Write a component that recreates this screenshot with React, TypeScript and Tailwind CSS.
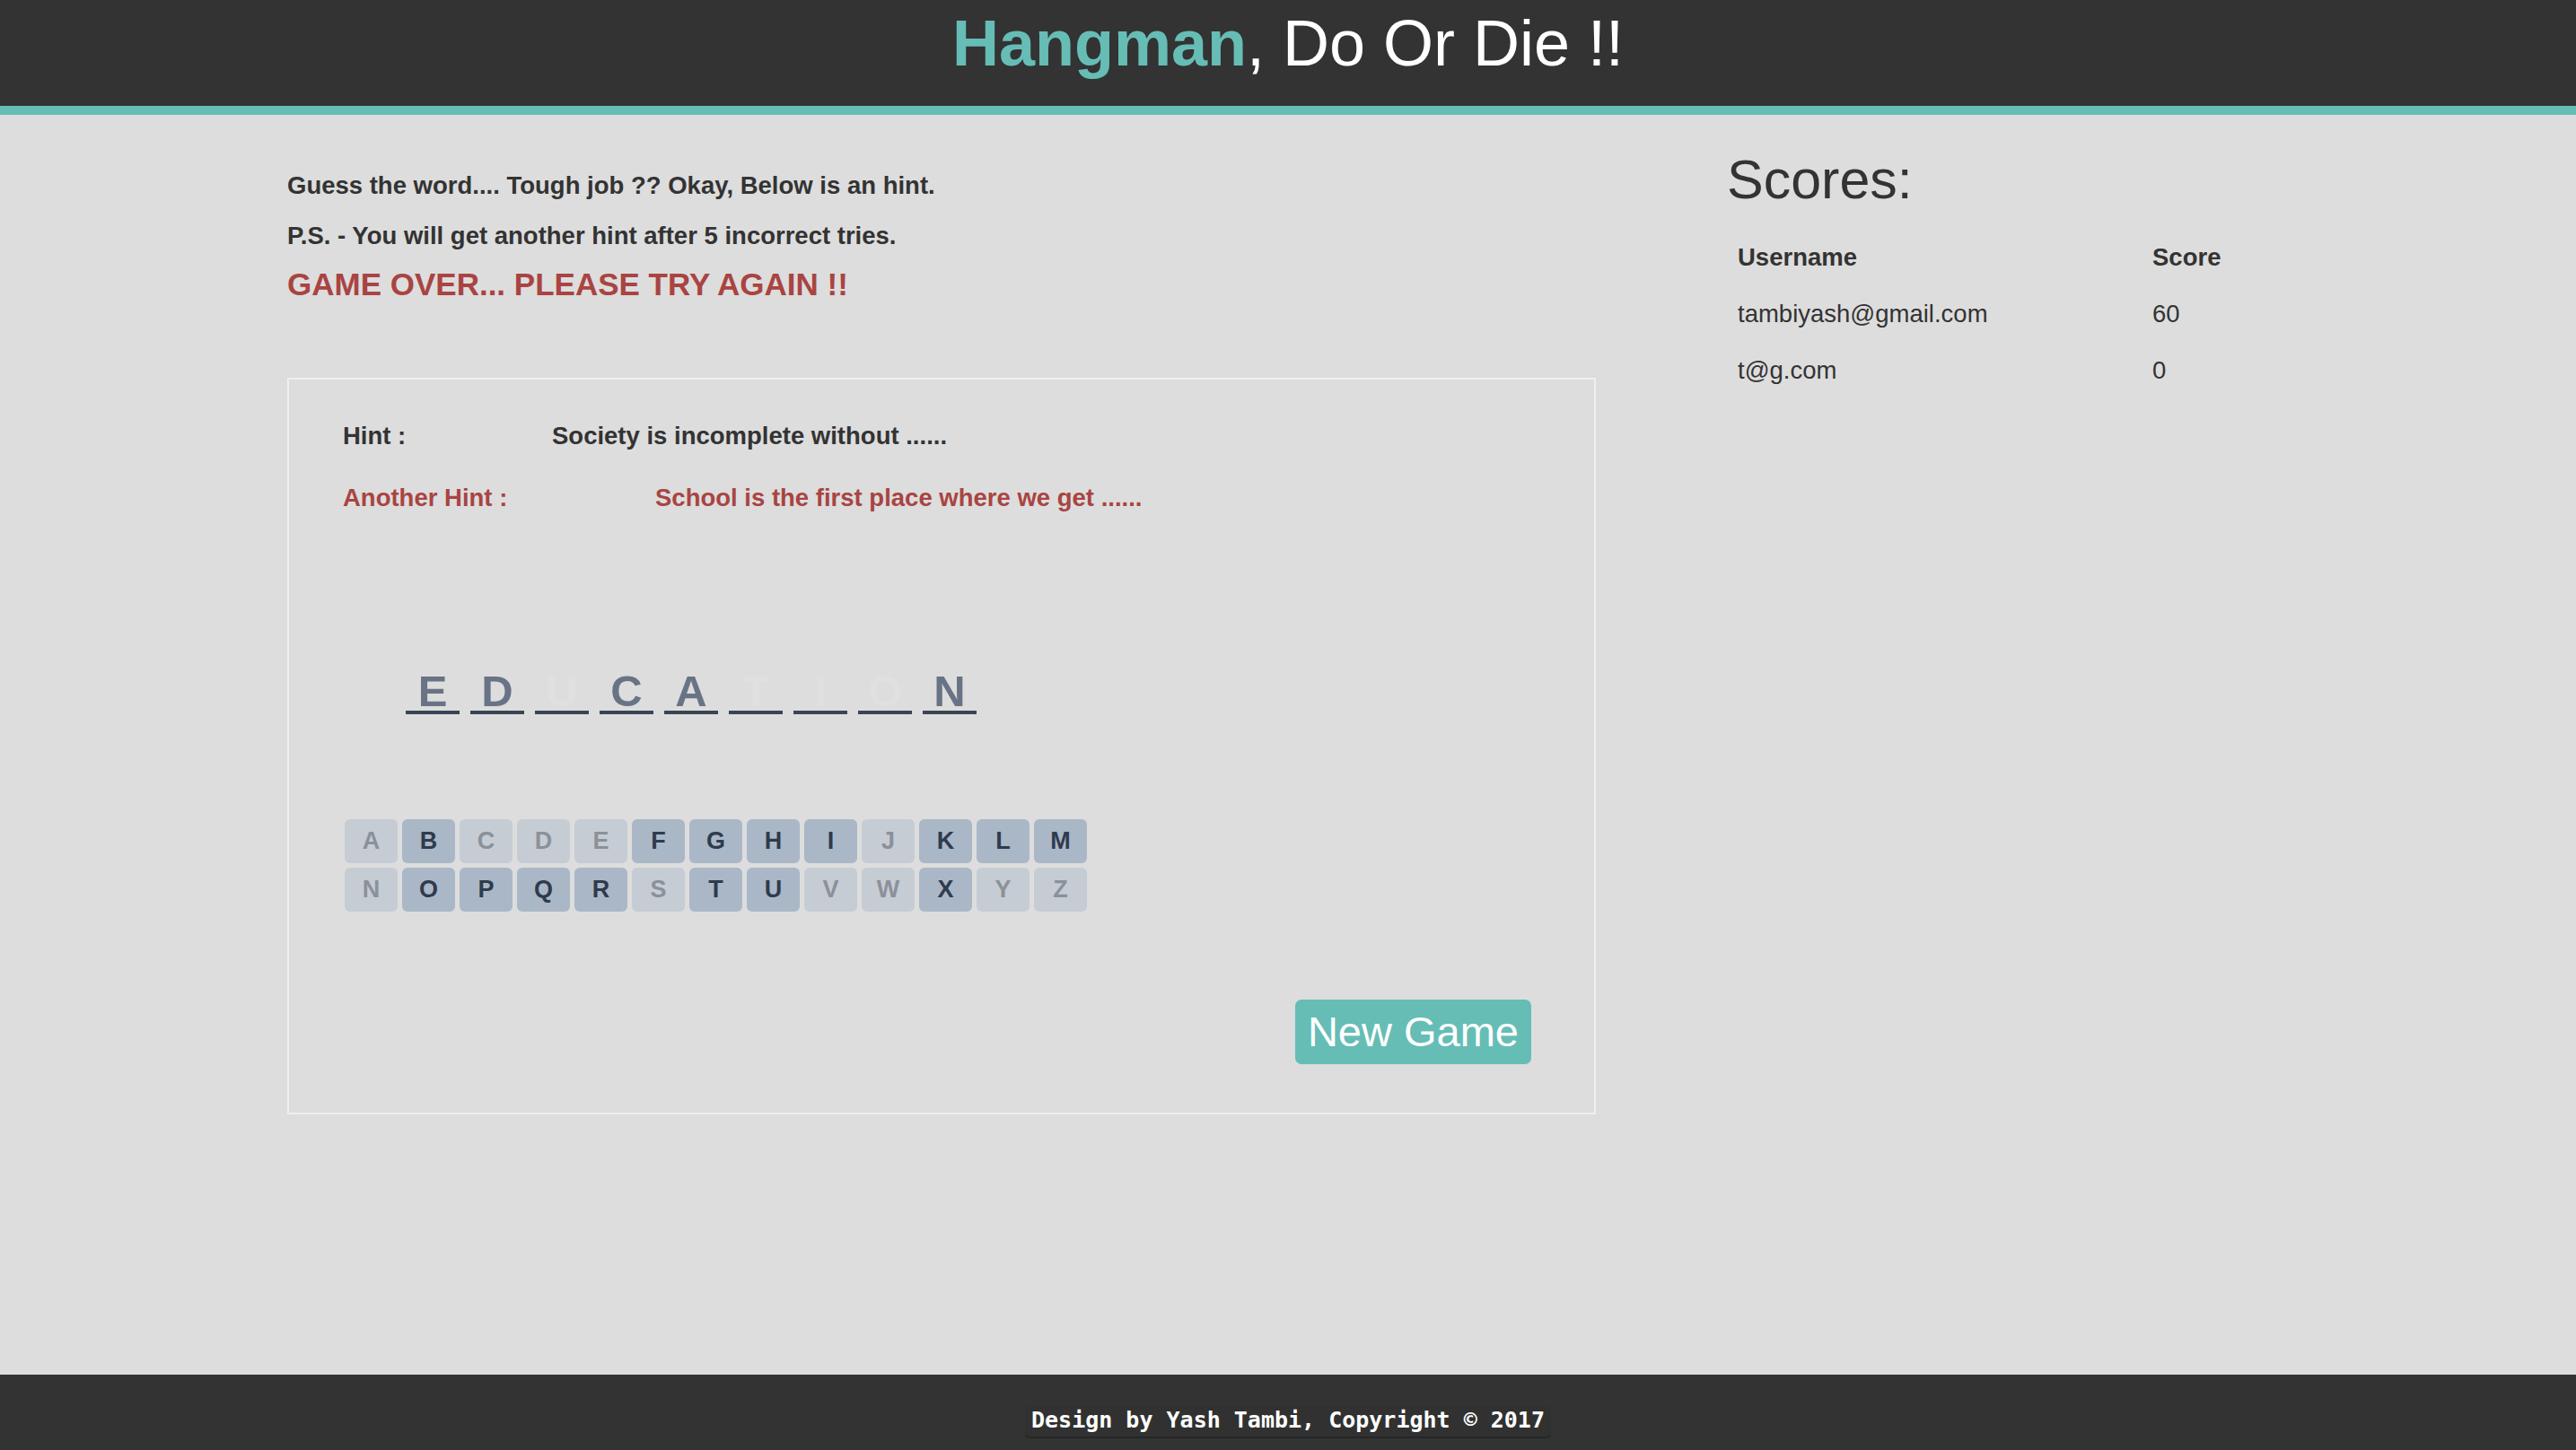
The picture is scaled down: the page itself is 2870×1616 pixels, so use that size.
import React from "react";

const rowOne = "ABCDEFGHIJKLM".split("");
const rowTwo = "NOPQRSTUVWXYZ".split("");
const usedLetters = new Set(["A", "C", "D", "E", "J", "N", "S", "V", "W", "Y", "Z"]);

const word = [
  { ch: "E", shown: true },
  { ch: "D", shown: true },
  { ch: "U", shown: false },
  { ch: "C", shown: true },
  { ch: "A", shown: true },
  { ch: "T", shown: false },
  { ch: "I", shown: false },
  { ch: "O", shown: false },
  { ch: "N", shown: true },
];

const scores = [
  { user: "tambiyash@gmail.com", score: 60 },
  { user: "t@g.com", score: 0 },
];

const Key = ({ letter }: { letter: string }) => {
  const used = usedLetters.has(letter);
  return (
    <button
      className={
        used
          ? "w-[59px] h-[49px] rounded-[6px] bg-[#c5ccd4] text-[#8b9199] text-[27px] font-bold flex items-center justify-center"
          : "w-[59px] h-[49px] rounded-[6px] bg-[#aab7c7] text-[#2f3b4d] text-[27px] font-bold flex items-center justify-center"
      }
    >
      {letter}
    </button>
  );
};

const App = () => {
  return (
    <div className="min-h-screen flex flex-col bg-[#dddddd] text-[#333333] font-['Liberation_Sans',Arial,sans-serif]">
      {/* Header */}
      <header className="h-[128px] bg-[#333333] border-b-[10px] border-[#66bdb6]">
        <h1 className="text-center text-[72px] leading-none pt-[12px] text-white">
          <span className="font-bold text-[#66bdb6]">Hangman</span>, Do Or Die !!
        </h1>
      </header>

      <main className="flex-1 flex pl-[320px]">
        {/* Game column */}
        <section className="w-[1458px]">
          <p className="mt-[59px] text-[27.5px] leading-[40px] font-bold">
            Guess the word.... Tough job ?? Okay, Below is an hint.
          </p>
          <p className="mt-[16px] text-[27.5px] leading-[40px] font-bold">
            P.S. - You will get another hint after 5 incorrect tries.
          </p>
          <p className="mt-[12px] text-[35px] leading-[44px] font-bold text-[#a94442]">
            GAME OVER... PLEASE TRY AGAIN !!
          </p>

          <div className="mt-[82px] border-2 border-[#efefef] px-[60px] pt-[43px] pb-[54px]">
            <div className="flex text-[27.5px] leading-[40px] font-bold">
              <span className="w-[233px]">Hint :</span>
              <span>Society is incomplete without ......</span>
            </div>
            <div className="mt-[29px] flex text-[27.5px] leading-[40px] font-bold text-[#a94442]">
              <span className="w-[348px]">Another Hint :</span>
              <span>School is the first place where we get ......</span>
            </div>

            {/* Word */}
            <div className="mt-[174px] pl-[70px] flex gap-[12px]">
              {word.map((w, i) => (
                <span
                  key={i}
                  className={
                    w.shown
                      ? "w-[60px] text-center text-[49px] leading-[43px] font-bold text-[#687486] border-b-4 border-[#3a4454]"
                      : "w-[60px] text-center text-[49px] leading-[43px] font-bold text-[#dfe0e2] border-b-4 border-[#3a4454]"
                  }
                >
                  {w.ch}
                </span>
              ))}
            </div>

            {/* Keyboard */}
            <div className="mt-[117px] ml-[2px] flex flex-col gap-[5px]">
              <div className="flex gap-[5px]">
                {rowOne.map((l) => (
                  <Key key={l} letter={l} />
                ))}
              </div>
              <div className="flex gap-[5px]">
                {rowTwo.map((l) => (
                  <Key key={l} letter={l} />
                ))}
              </div>
            </div>

            <div className="mt-[98px] flex justify-end pr-[10px]">
              <button className="h-[72px] px-[14px] rounded-[7px] bg-[#66bdb6] text-white text-[47px] leading-[72px]">
                New Game
              </button>
            </div>
          </div>
        </section>

        {/* Scores column */}
        <aside className="ml-[146px] w-[620px]">
          <h2 className="mt-[39px] text-[61px] leading-[67px]">Scores:</h2>
          <table className="mt-[21px] w-[612px] text-[27.5px] leading-[40px] text-left">
            <thead>
              <tr>
                <th className="w-[462px] px-[12px] py-[11.5px] font-bold">Username</th>
                <th className="px-[12px] py-[11.5px] font-bold">Score</th>
              </tr>
            </thead>
            <tbody>
              {scores.map((s) => (
                <tr key={s.user}>
                  <td className="px-[12px] py-[11.5px]">{s.user}</td>
                  <td className="px-[12px] py-[11.5px]">{s.score}</td>
                </tr>
              ))}
            </tbody>
          </table>
        </aside>
      </main>

      {/* Footer */}
      <footer className="h-[84px] bg-[#333333] flex justify-center pt-[35px]">
        <code className="h-[34px] px-[7px] rounded-[5px] bg-[#313131] shadow-[0_2px_0_#262626] text-white text-[25px] leading-[32px] font-bold font-['DejaVu_Sans_Mono',monospace]">
          Design by Yash Tambi, Copyright © 2017
        </code>
      </footer>
    </div>
  );
};

export default App;
